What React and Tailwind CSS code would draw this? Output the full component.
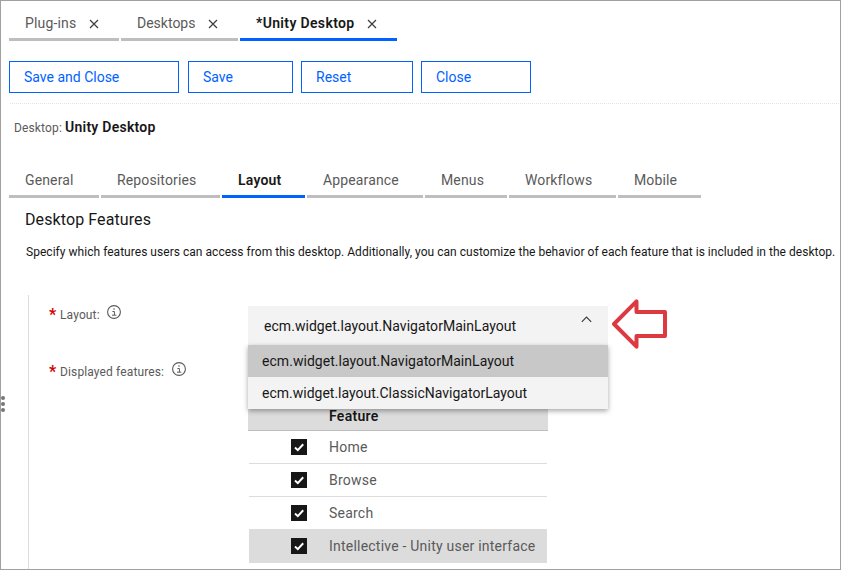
import React from "react";

const openTabs = [
  { label: "Plug-ins", box: "w-[110px] border-[#bebebe]", text: "w-[64px] text-[#5a5a5a] tracking-[0.16px]" },
  { label: "Desktops", box: "w-[117px] border-[#bebebe]", text: "w-[71px] text-[#5a5a5a]" },
  { label: "*Unity Desktop", box: "w-[157px] border-[#0062ff]", text: "w-[111px] text-[#171717] font-semibold tracking-[0.35px]" },
];

const actions = [
  { label: "Save and Close", box: "w-[170px] mr-[9px]" },
  { label: "Save", box: "w-[105px] mr-2" },
  { label: "Reset", box: "w-[112px] mr-2" },
  { label: "Close", box: "w-[110px]" },
];

const sections = [
  { label: "General", box: "w-[90px]" },
  { label: "Repositories", box: "w-[119px]" },
  { label: "Layout", box: "w-[83px]", active: true },
  { label: "Appearance", box: "w-[116px]" },
  { label: "Menus", box: "w-[82px]" },
  { label: "Workflows", box: "w-[107px]" },
  { label: "Mobile", box: "w-[83px]" },
];

const features = [
  { label: "Home", row: "h-[33px] border-b" },
  { label: "Browse", row: "h-[33px] border-b" },
  { label: "Search", row: "h-[32px]" },
  { label: "Intellective - Unity user interface", row: "h-[34px] bg-[#dcdcdc]" },
];

function CloseIcon() {
  return (
    <svg width="10" height="10" viewBox="0 0 10 10" className="mt-px shrink-0" fill="none" stroke="#3c3c3c" strokeWidth="1.15">
      <path d="M1 1l8 8M9 1L1 9" />
    </svg>
  );
}

function InfoIcon() {
  return (
    <svg width="14" height="14" viewBox="0 0 14 14" className="shrink-0" fill="none" stroke="#5a5a5a">
      <circle cx="7" cy="7" r="6.4" strokeWidth="1.1" />
      <path d="M5.4 6.5h2v3.5M5 10.2h4.4" strokeWidth="1" />
      <circle cx="7" cy="4" r=".8" fill="#5a5a5a" stroke="none" />
    </svg>
  );
}

function Checkbox() {
  return (
    <span className="ml-[42px] flex size-4 shrink-0 bg-[#171717]">
      <svg width="16" height="16" viewBox="0 0 16 16" fill="none" stroke="#fff" strokeWidth="2">
        <path d="M4 8.6l2.8 2.6L12.2 5.3" />
      </svg>
    </span>
  );
}

function FieldLabel({ children, width }) {
  return (
    <div className="flex h-[18px] items-start">
      <span className="mt-px w-[7px] shrink-0 text-[16px] font-bold leading-[18px] text-[#d00000]">*</span>
      <span className={`ml-[4px] mt-[2px] whitespace-nowrap text-[12px] leading-[16px] tracking-[0.13px] text-[#5a5a5a] ${width}`}>{children}</span>
      <InfoIcon />
    </div>
  );
}

export default function App() {
  return (
    <div className="flex h-[570px] w-[841px] overflow-hidden border border-[#a0a0a0] bg-white font-['Roboto','Liberation_Sans',sans-serif] text-[14px] text-[#171717]">
      <div className="mt-[395px] flex w-2 shrink-0 flex-col gap-[2px]">
        <span className="size-1 rounded-full bg-[#757575]" />
        <span className="size-1 rounded-full bg-[#757575]" />
        <span className="size-1 rounded-full bg-[#757575]" />
      </div>
      <main className="flex min-w-0 flex-1 flex-col">
        <nav className="flex h-10 gap-[2px]">
          {openTabs.map((t) => (
            <div key={t.label} className={`flex shrink-0 items-center border-b-[3px] pl-4 pt-[7px] ${t.box}`}>
              <span className={`shrink-0 whitespace-nowrap leading-5 ${t.text}`}>{t.label}</span>
              <CloseIcon />
            </div>
          ))}
        </nav>

        <div className="mt-5 flex h-8">
          {actions.map((a) => (
            <button key={a.label} className={`border border-[#0062ff] pl-[14px] text-left text-[#0062ff] ${a.box}`}>
              {a.label}
            </button>
          ))}
        </div>

        <div className="ml-px mt-[10px] h-px bg-[repeating-linear-gradient(90deg,#e4e4e4_0_1px,transparent_1px_2px)]" />

        <div className="mt-[13px] flex h-5 items-baseline pl-[5px] leading-5">
          <span className="w-[51px] text-[12px] tracking-[0.14px] text-[#5a5a5a]">Desktop:</span>
          <span className="font-semibold tracking-[0.25px]">Unity Desktop</span>
        </div>

        <nav className="mt-[29px] flex h-[32px] gap-[2px]">
          {sections.map((s) => (
            <div
              key={s.label}
              className={`shrink-0 border-b-[3px] pl-4 pt-[4px] leading-5 ${s.box} ${
                s.active ? "border-[#0062ff] font-semibold tracking-[0.2px]" : "border-[#bebebe] tracking-[0.14px] text-[#5a5a5a]"
              }`}
            >
              {s.label}
            </div>
          ))}
        </nav>

        <h1 className="mt-[10px] pl-4 text-[16px] leading-6 tracking-[0.1px]">Desktop Features</h1>
        <p className="mt-[12px] whitespace-nowrap pl-[17px] text-[12px] leading-4 tracking-[0.033px]">
          Specify which features users can access from this desktop. Additionally, you can customize the behavior of each feature that is included in the desktop.
        </p>

        <section className="ml-[19px] mt-[35px] flex flex-1 border-l border-[#dcdcdc]">
          <div className="w-[219px] shrink-0 pl-[20px] pt-[10px]">
            <FieldLabel width="w-[47px]">Layout:</FieldLabel>
            <div className="h-[39px]" />
            <FieldLabel width="w-[112px]">Displayed features:</FieldLabel>
          </div>

          <div className="relative w-[360px] shrink-0 pt-[11px]">
            <div className="flex h-[39px] items-start justify-between bg-[#f3f3f3] px-4">
              <span className="mt-[10px] leading-5 tracking-[0.04px]">ecm.widget.layout.NavigatorMainLayout</span>
              <svg width="11" height="7" viewBox="0 0 11 7" className="mt-[10px]" fill="none" stroke="#3c3c3c" strokeWidth="1.2">
                <path d="M.8 5.8l4.7-4.7 4.7 4.7" />
              </svg>
            </div>
            <ul className="absolute left-0 top-[50px] z-10 w-[360px] bg-[#f3f3f3] leading-8 shadow-[0_2px_5px_rgba(0,0,0,0.35)]">
              <li className="h-8 bg-[#c8c8c8] pl-[14px] tracking-[0.04px]">ecm.widget.layout.NavigatorMainLayout</li>
              <li className="h-8 pl-[14px]">ecm.widget.layout.ClassicNavigatorLayout</li>
            </ul>

            <div className="mt-[54px] h-8 w-[300px] border-b border-[#bebebe] bg-[#dcdcdc] pl-[81px] pt-[7px] font-semibold leading-5 tracking-[0.3px]">Feature</div>
            <div className="ml-px w-[298px]">
              {features.map((f) => (
                <div key={f.label} className={`flex items-center border-[#dcdcdc] ${f.row}`}>
                  <Checkbox />
                  <span className="ml-[22px] whitespace-nowrap tracking-[0.22px] text-[#5a5a5a]">{f.label}</span>
                </div>
              ))}
            </div>
          </div>

          <svg width="56" height="50" viewBox="0 0 56 50" className="ml-[4px] mt-[4px] shrink-0" fill="none" stroke="#dc3a40" strokeWidth="4">
            <path d="M2 25L24.5 2.3V13H53V37H24.5V47.7Z" strokeLinejoin="round" />
          </svg>
        </section>
      </main>
    </div>
  );
}
